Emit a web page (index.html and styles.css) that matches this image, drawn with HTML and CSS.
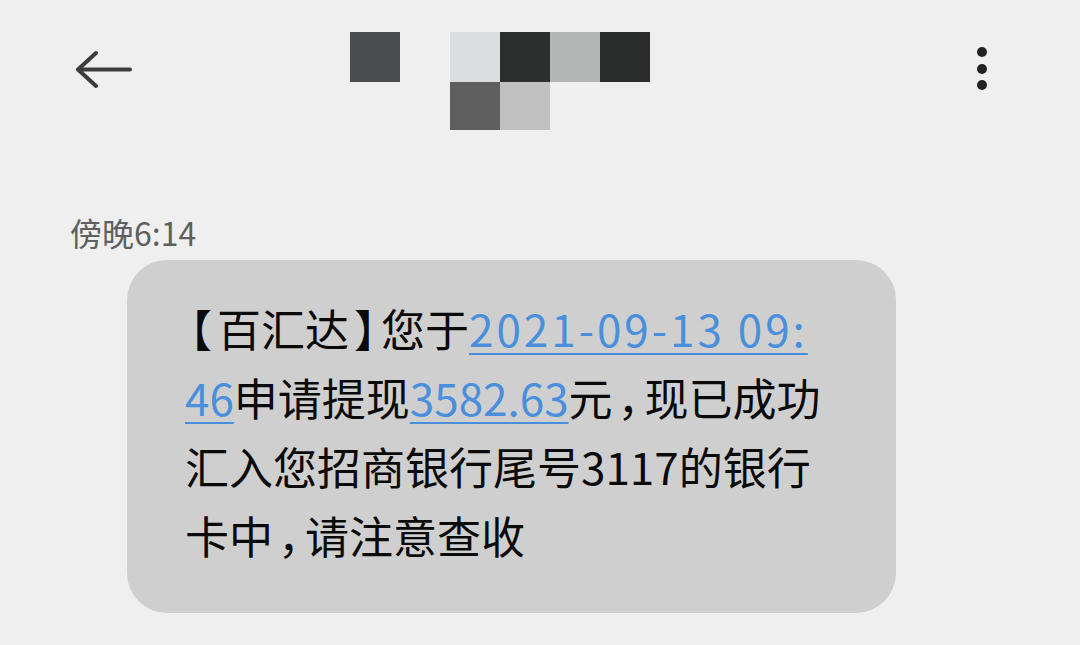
FILE: index.html
```html
<!DOCTYPE html>
<html lang="zh-CN">
<head>
<meta charset="utf-8">
<title>短信</title>
<link rel="stylesheet" href="styles.css">
</head>
<body>
<div class="page">
  <header class="header">
    <div class="back">
      <svg width="56" height="40" viewBox="0 0 56 40" aria-hidden="true">
        <path d="M20 3 L2 19.5 L20 36 M2 19.5 H54" fill="none" stroke="#3c3c3c" stroke-width="4" stroke-linecap="round" stroke-linejoin="round"/>
      </svg>
    </div>
    <div class="mosaic">
      <span class="px c1"></span><span class="px"></span><span class="px c2"></span><span class="px c3"></span><span class="px c4"></span><span class="px c5"></span>
      <span class="px"></span><span class="px"></span><span class="px c6"></span><span class="px c7"></span><span class="px"></span><span class="px"></span>
    </div>
    <div class="more">
      <span class="dot"></span><span class="dot"></span><span class="dot"></span>
    </div>
  </header>
  <div class="time">傍晚6:14</div>
  <div class="bubble">
    <p class="msg"><span class="pn">【</span>百汇达<span class="pn">】</span>您于<a class="link date" href="#">2021-09-13 09:</a><br><a class="link" href="#">46</a>申请提现<a class="link" href="#">3582.63</a>元<span class="pn">，</span>现已成功<br>汇入您招商银行尾号3117的银行<br>卡中<span class="pn">，</span>请注意查收</p>
  </div>
</div>
</body>
</html>
```

FILE: styles.css
```css
html, body {
  margin: 0;
  padding: 0;
  background: #efeff0;
}
body {
  font-family: "Noto Sans CJK SC", "Noto Sans", sans-serif;
  color: #111;
}
.page {
  width: 1080px;
  height: 645px;
  overflow: hidden;
}
.header {
  height: 150px;
  display: grid;
  grid-template-columns: 350px 300px 1fr;
  align-items: start;
}
.back {
  padding: 50px 0 0 76px;
}
.back svg {
  display: block;
}
.mosaic {
  margin-top: 32px;
  display: grid;
  grid-template-columns: repeat(6, 50px);
  grid-template-rows: 50px 48px;
}
.px { display: block; }
.c1 { background: #4b4c4d; }
.c2 { background: #dcdddf; }
.c3 { background: #2d2e2e; }
.c4 { background: #b4b5b5; }
.c5 { background: #2b2c2c; }
.c6 { background: #5e5e5f; }
.c7 { background: #c0c0c0; }
.more {
  display: flex;
  flex-direction: column;
  align-items: center;
  gap: 6.5px;
  width: 12px;
  margin: 47px 0 0 326px;
}
.dot {
  width: 10px;
  height: 10px;
  border-radius: 50%;
  background: #222;
}
.time {
  margin: 62px 0 0 70px;
  font-size: 32px;
  line-height: 40px;
  color: #5f5f5f;
}
.bubble {
  box-sizing: border-box;
  margin: 8px 0 0 127px;
  width: 769px;
  height: 353px;
  border-radius: 40px;
  background: #cfcfcf;
  padding: 34px 0 0 58px;
}
.msg {
  margin: 0;
  font-size: 44px;
  line-height: 69px;
  white-space: nowrap;
  color: #0a0a0a;
}
.pn {
  font-feature-settings: "halt";
  margin: 0 5px;
}
.link {
  color: #4a8fdc;
  text-decoration: underline;
  text-decoration-thickness: 2px;
  text-underline-offset: 6px;
}
.date {
  letter-spacing: 3px;
}
```
